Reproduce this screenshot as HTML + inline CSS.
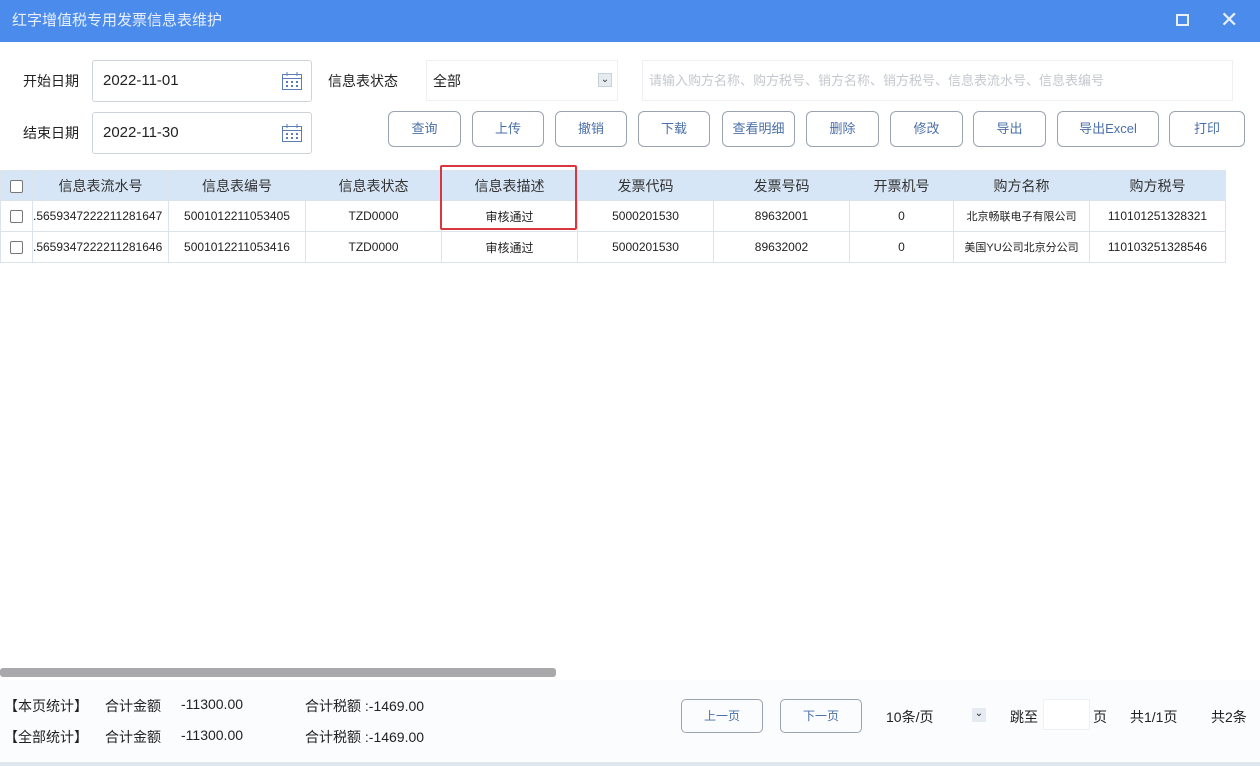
<!DOCTYPE html>
<html><head><meta charset="utf-8"><style>
*{box-sizing:border-box;margin:0;padding:0}
body{width:1260px;height:766px;background:#fff;font-family:"Liberation Sans","Noto Sans CJK SC",sans-serif;color:#222;position:relative;overflow:hidden;font-size:13px}
.a{position:absolute}
.title{left:0;top:0;width:1260px;height:42px;background:#4b8beb;color:#e8f0ff;font-size:15px;line-height:42px;padding-left:12px}
.lbl{font-size:14px;color:#222}
.inp{border:1px solid #cfd4da;border-radius:3px;background:#fff;font-size:15px;padding-left:10px;color:#222}
.btn{border:1px solid #9aa4b0;border-radius:6px;background:#fff;color:#4a6fa8;font-size:13px;text-align:center;line-height:34px;height:36px;top:111px}
table{border-collapse:collapse;position:absolute;left:0;top:170px;table-layout:fixed}
td,th{border:1px solid #dde3ea;text-align:center;font-size:12px;height:31px;white-space:nowrap;overflow:hidden;padding:0}
th{background:#d6e6f6;font-weight:normal;font-size:14px;color:#333;height:30px}
.cb{display:inline-block;width:13px;height:13px;border:1px solid #777;border-radius:2px;background:#fff;vertical-align:middle}
.foot{font-size:14px;color:#222;white-space:nowrap}
</style></head><body>
<div class="a title">红字增值税专用发票信息表维护</div>
<div class="a" style="left:1176px;top:14px;width:13px;height:12px;border:2px solid #e8f0ff"></div>
<div class="a" style="left:1220px;top:8px;color:#e8f0ff;font-size:22px;line-height:24px">✕</div>

<div class="a lbl" style="left:23px;top:71px">开始日期</div>
<div class="a inp" style="left:92px;top:60px;width:220px;height:42px;line-height:40px">2022-11-01</div>
<div class="a lbl" style="left:23px;top:123px">结束日期</div>
<div class="a inp" style="left:92px;top:112px;width:220px;height:42px;line-height:40px">2022-11-30</div>
<svg class="a" style="left:281px;top:71px" width="22" height="20" viewBox="0 0 22 20"><rect x="1.5" y="3.5" width="19" height="15" fill="none" stroke="#5a7db8"/><line x1="1.5" y1="7.5" x2="20.5" y2="7.5" stroke="#5a7db8"/><line x1="6" y1="1" x2="6" y2="5" stroke="#5a7db8"/><line x1="16" y1="1" x2="16" y2="5" stroke="#5a7db8"/><g fill="#5a7db8"><rect x="5" y="10" width="2" height="2"/><rect x="10" y="10" width="2" height="2"/><rect x="15" y="10" width="2" height="2"/><rect x="5" y="14" width="2" height="2"/><rect x="10" y="14" width="2" height="2"/><rect x="15" y="14" width="2" height="2"/></g></svg>
<svg class="a" style="left:281px;top:123px" width="22" height="20" viewBox="0 0 22 20"><rect x="1.5" y="3.5" width="19" height="15" fill="none" stroke="#5a7db8"/><line x1="1.5" y1="7.5" x2="20.5" y2="7.5" stroke="#5a7db8"/><line x1="6" y1="1" x2="6" y2="5" stroke="#5a7db8"/><line x1="16" y1="1" x2="16" y2="5" stroke="#5a7db8"/><g fill="#5a7db8"><rect x="5" y="10" width="2" height="2"/><rect x="10" y="10" width="2" height="2"/><rect x="15" y="10" width="2" height="2"/><rect x="5" y="14" width="2" height="2"/><rect x="10" y="14" width="2" height="2"/><rect x="15" y="14" width="2" height="2"/></g></svg>

<div class="a lbl" style="left:328px;top:71px">信息表状态</div>
<div class="a" style="left:426px;top:60px;width:192px;height:41px;border:1px solid #eef0f3;font-size:14px;line-height:40px;padding-left:6px">全部</div>
<div class="a" style="left:598px;top:73px;width:14px;height:14px;background:#e6ebf2;border:1px solid #c8d0da;font-size:10px;line-height:12px;text-align:center;color:#333">⌄</div>
<div class="a" style="left:642px;top:60px;width:591px;height:41px;border:1px solid #eef0f3;color:#c4c8ce;font-size:13px;line-height:40px;padding-left:6px">请输入购方名称、购方税号、销方名称、销方税号、信息表流水号、信息表编号</div>

<div class="a btn" style="left:388px;width:73px">查询</div>
<div class="a btn" style="left:472px;width:72px">上传</div>
<div class="a btn" style="left:555px;width:72px">撤销</div>
<div class="a btn" style="left:638px;width:72px">下载</div>
<div class="a btn" style="left:722px;width:73px">查看明细</div>
<div class="a btn" style="left:806px;width:73px">删除</div>
<div class="a btn" style="left:890px;width:73px">修改</div>
<div class="a btn" style="left:973px;width:73px">导出</div>
<div class="a btn" style="left:1057px;width:102px">导出Excel</div>
<div class="a btn" style="left:1169px;width:76px">打印</div>

<table>
<colgroup><col style="width:32px"><col style="width:136px"><col style="width:137px"><col style="width:136px"><col style="width:136px"><col style="width:136px"><col style="width:136px"><col style="width:104px"><col style="width:136px"><col style="width:136px"></colgroup>
<tr><th><span class="cb"></span></th><th>信息表流水号</th><th>信息表编号</th><th>信息表状态</th><th>信息表描述</th><th>发票代码</th><th>发票号码</th><th>开票机号</th><th>购方名称</th><th>购方税号</th></tr>
<tr><td><span class="cb"></span></td><td style="text-align:left">.5659347222211281647</td><td>5001012211053405</td><td>TZD0000</td><td>审核通过</td><td>5000201530</td><td>89632001</td><td>0</td><td style="font-size:11px">北京畅联电子有限公司</td><td>110101251328321</td></tr>
<tr><td><span class="cb"></span></td><td style="text-align:left">.5659347222211281646</td><td>5001012211053416</td><td>TZD0000</td><td>审核通过</td><td>5000201530</td><td>89632002</td><td>0</td><td style="font-size:11px">美国YU公司北京分公司</td><td>110103251328546</td></tr>
</table>
<div class="a" style="left:440px;top:165px;width:137px;height:65px;border:2px solid #d9363e;border-radius:2px"></div>

<div class="a" style="left:0;top:668px;width:556px;height:9px;background:#a9a9ab;border-radius:3px"></div>
<div class="a" style="left:0;top:680px;width:1260px;height:86px;background:#fbfcfd"></div>
<div class="a" style="left:0;top:762px;width:1260px;height:4px;background:#dfe6ee"></div>

<div class="a foot" style="left:4px;top:696px">【本页统计】</div>
<div class="a foot" style="left:105px;top:696px">合计金额</div>
<div class="a foot" style="left:181px;top:696px">-11300.00</div>
<div class="a foot" style="left:305px;top:696px">合计税额 :-1469.00</div>
<div class="a foot" style="left:4px;top:727px">【全部统计】</div>
<div class="a foot" style="left:105px;top:727px">合计金额</div>
<div class="a foot" style="left:181px;top:727px">-11300.00</div>
<div class="a foot" style="left:305px;top:727px">合计税额 :-1469.00</div>

<div class="a" style="left:681px;top:699px;width:82px;height:34px;border:1px solid #9aa4b0;border-radius:5px;text-align:center;line-height:32px;color:#4a6fa8;font-size:12px">上一页</div>
<div class="a" style="left:780px;top:699px;width:82px;height:34px;border:1px solid #9aa4b0;border-radius:5px;text-align:center;line-height:32px;color:#4a6fa8;font-size:12px">下一页</div>
<div class="a foot" style="left:886px;top:707px">10条/页</div>
<div class="a" style="left:972px;top:708px;width:14px;height:14px;background:#e6ebf2;font-size:10px;line-height:12px;text-align:center">⌄</div>
<div class="a foot" style="left:1010px;top:707px">跳至</div>
<div class="a" style="left:1043px;top:699px;width:47px;height:31px;border:1px solid #eef0f3;background:#fff"></div>
<div class="a foot" style="left:1093px;top:707px">页</div>
<div class="a foot" style="left:1130px;top:707px">共1/1页</div>
<div class="a foot" style="left:1211px;top:707px">共2条</div>
</body></html>
